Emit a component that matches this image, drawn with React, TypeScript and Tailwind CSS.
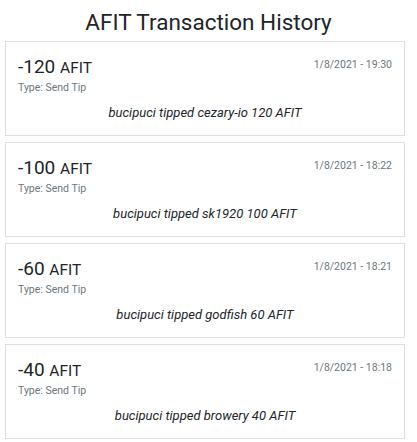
import React from 'react';

type Tx = {
  amount: number;
  date: string;
  type: string;
  note: string;
};

const txs: Tx[] = [
  { amount: -120, date: '1/8/2021 - 19:30', type: 'Send Tip', note: 'bucipuci tipped cezary-io 120 AFIT' },
  { amount: -100, date: '1/8/2021 - 18:22', type: 'Send Tip', note: 'bucipuci tipped sk1920 100 AFIT' },
  { amount: -60, date: '1/8/2021 - 18:21', type: 'Send Tip', note: 'bucipuci tipped godfish 60 AFIT' },
  { amount: -40, date: '1/8/2021 - 18:18', type: 'Send Tip', note: 'bucipuci tipped browery 40 AFIT' },
];

const TxCard = ({ tx }: { tx: Tx }) => (
  <div className="h-[95px] border border-[#dedede] bg-white px-3 pt-[13px]">
    <div className="flex items-start justify-between h-[24px]">
      <div className="text-[19px] leading-[24px] text-[#212529]">
        {tx.amount} <span className="text-[15.5px]">AFIT</span>
      </div>
      <div className="text-[10.5px] leading-[16px] text-[#6c757d] mt-[2px]">{tx.date}</div>
    </div>
    <div className="text-[10.5px] leading-[14px] text-[#6c757d] mt-[2px]">Type: {tx.type}</div>
    <div className="text-center italic text-[13px] leading-[18px] text-[#212529] mt-[9px]">{tx.note}</div>
  </div>
);

const App = () => {
  return (
    <div className="w-[417px] min-h-[442px] bg-white font-['Roboto',sans-serif] px-[5px] pt-[7px]">
      <h1 className="text-center text-[22.5px] leading-[30px] font-normal text-[#212529] mb-[4px]">
        AFIT Transaction History
      </h1>
      <div className="flex flex-col gap-[6px] w-[400px]">
        {txs.map((tx) => (
          <TxCard key={tx.date} tx={tx} />
        ))}
      </div>
    </div>
  );
};

export default App;
